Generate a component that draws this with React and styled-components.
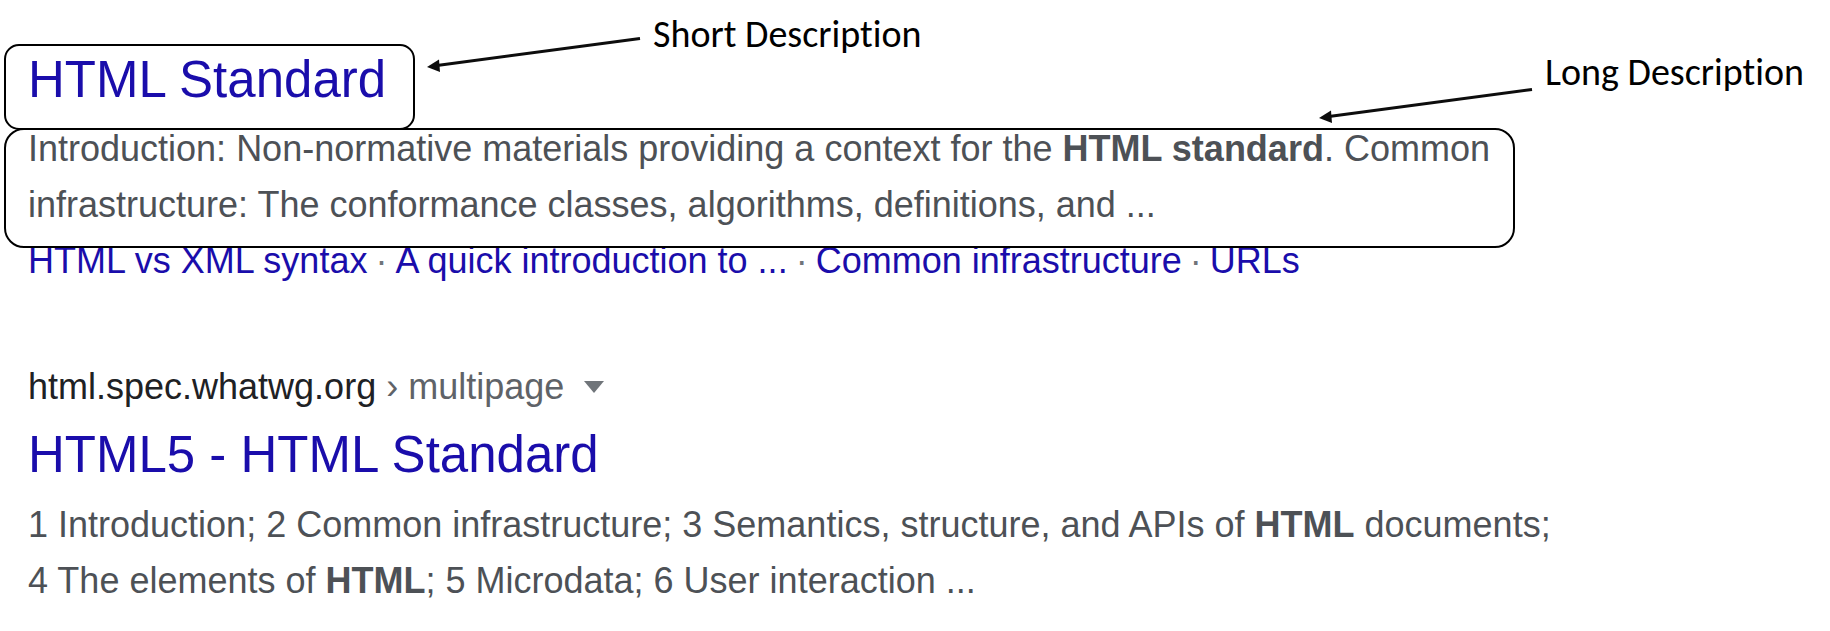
import React from "react";
import styled, { createGlobalStyle } from "styled-components";

const GlobalStyle = createGlobalStyle`
  *, *::before, *::after { box-sizing: border-box; }
  body {
    margin: 0;
    background: #fff;
    color: #4d5156;
    font-family: "Liberation Sans", Arial, sans-serif;
    font-size: 36px;
    line-height: 56px;
  }
  a { color: #1a0dab; text-decoration: none; }
`;

const Page = styled.main`
  padding: 0 4px 8px;
`;

const TitleRow = styled.div`
  display: flex;
  align-items: flex-start;
`;

const Outline = styled.div`
  position: relative;
  z-index: 1;
  border: 2px solid #000;
  border-radius: ${(p) => p.$radius}px;
  padding: ${(p) => p.$padding};
`;

const TitleOutline = styled(Outline)`
  flex: none;
  width: 411px;
  margin-top: 44px;
`;

const DescriptionOutline = styled(Outline)`
  max-width: 1511px;
  margin-top: -2px;
`;

const Title = styled.h3`
  margin: 0;
  font-size: 51px;
  font-weight: 400;
  line-height: 64px;
  white-space: nowrap;
`;

const Snippet = styled.p`
  margin: 0;
  max-width: 1540px;
`;

const OutlinedSnippet = styled(Snippet)`
  margin-top: -9px;
`;

const Callout = styled.div`
  display: flex;
  align-items: flex-start;
  gap: 12px;
  flex: none;
  margin-top: ${(p) => p.$top}px;
  margin-left: ${(p) => (p.$end ? "auto" : "12px")};
  margin-right: ${(p) => (p.$end ? "22px" : "0")};
`;

const CalloutLabel = styled.span`
  color: #000;
  font-family: Carlito, Lato, sans-serif;
  font-size: 38px;
  font-variant-ligatures: none;
  line-height: 40px;
  white-space: nowrap;
`;

const ArrowDrawing = styled.svg`
  display: block;
  margin-top: ${(p) => p.$drop}px;
`;

const SiteLinks = styled.nav`
  display: flex;
  gap: 8px;
  margin-top: -15px;
  padding-left: 24px;
  white-space: nowrap;
`;

const Dot = styled.span`
  color: #70757a;
`;

const Result = styled.article`
  margin-top: 70px;
  padding-left: 24px;
`;

const Source = styled.div`
  display: flex;
  align-items: center;
  gap: 20px;
  color: #5f6368;
`;

const Host = styled.span`
  color: #202124;
`;

const MenuButton = styled.button`
  display: flex;
  padding: 0;
  border: 0;
  background: none;
  cursor: pointer;
`;

const ResultTitle = styled(Title)`
  margin: 8px 0 10px;
`;

function Arrow({ drop }) {
  return (
    <ArrowDrawing $drop={drop} width="214" height="38" viewBox="0 0 214 38" aria-hidden="true">
      <path d="M10 29.500 L213 2.500" stroke="#0d0d0d" strokeWidth="3" />
      <path d="M0 31 L12 23.500 L13 36 Z" fill="#0d0d0d" />
    </ArrowDrawing>
  );
}

const siteLinks = [
  "HTML vs XML syntax",
  "A quick introduction to ...",
  "Common infrastructure",
  "URLs",
];

export default function App() {
  return (
    <>
      <GlobalStyle />
      <Page>
        <article>
          <TitleRow>
            <TitleOutline $radius={15} $padding="2px 22px 16px">
              <Title><a href="#standard">HTML Standard</a></Title>
            </TitleOutline>
            <Callout $top={14}>
              <Arrow drop={22} />
              <CalloutLabel>Short Description</CalloutLabel>
            </Callout>
            <Callout $top={52} $end>
              <Arrow drop={35} />
              <CalloutLabel>Long Description</CalloutLabel>
            </Callout>
          </TitleRow>
          <DescriptionOutline $radius={20} $padding="0 22px 13px">
            <OutlinedSnippet>
              Introduction: Non-normative materials providing a context for the{" "}
              <b>HTML standard</b>. Common infrastructure: The conformance
              classes, algorithms, definitions, and ...
            </OutlinedSnippet>
          </DescriptionOutline>
          <SiteLinks>
            {siteLinks.map((label, i) => (
              <React.Fragment key={label}>
                {i > 0 && <Dot>·</Dot>}
                <a href="#section">{label}</a>
              </React.Fragment>
            ))}
          </SiteLinks>
        </article>
        <Result>
          <Source>
            <span><Host>html.spec.whatwg.org</Host> › multipage</span>
            <MenuButton aria-label="More options">
              <svg width="20" height="12" viewBox="0 0 20 12">
                <path d="M0 0 H20 L10 12 Z" fill="#70757a" />
              </svg>
            </MenuButton>
          </Source>
          <ResultTitle><a href="#html5">HTML5 - HTML Standard</a></ResultTitle>
          <Snippet>
            1 Introduction; 2 Common infrastructure; 3 Semantics, structure, and
            APIs of <b>HTML</b> documents; 4 The elements of <b>HTML</b>; 5
            Microdata; 6 User interaction ...
          </Snippet>
        </Result>
      </Page>
    </>
  );
}
